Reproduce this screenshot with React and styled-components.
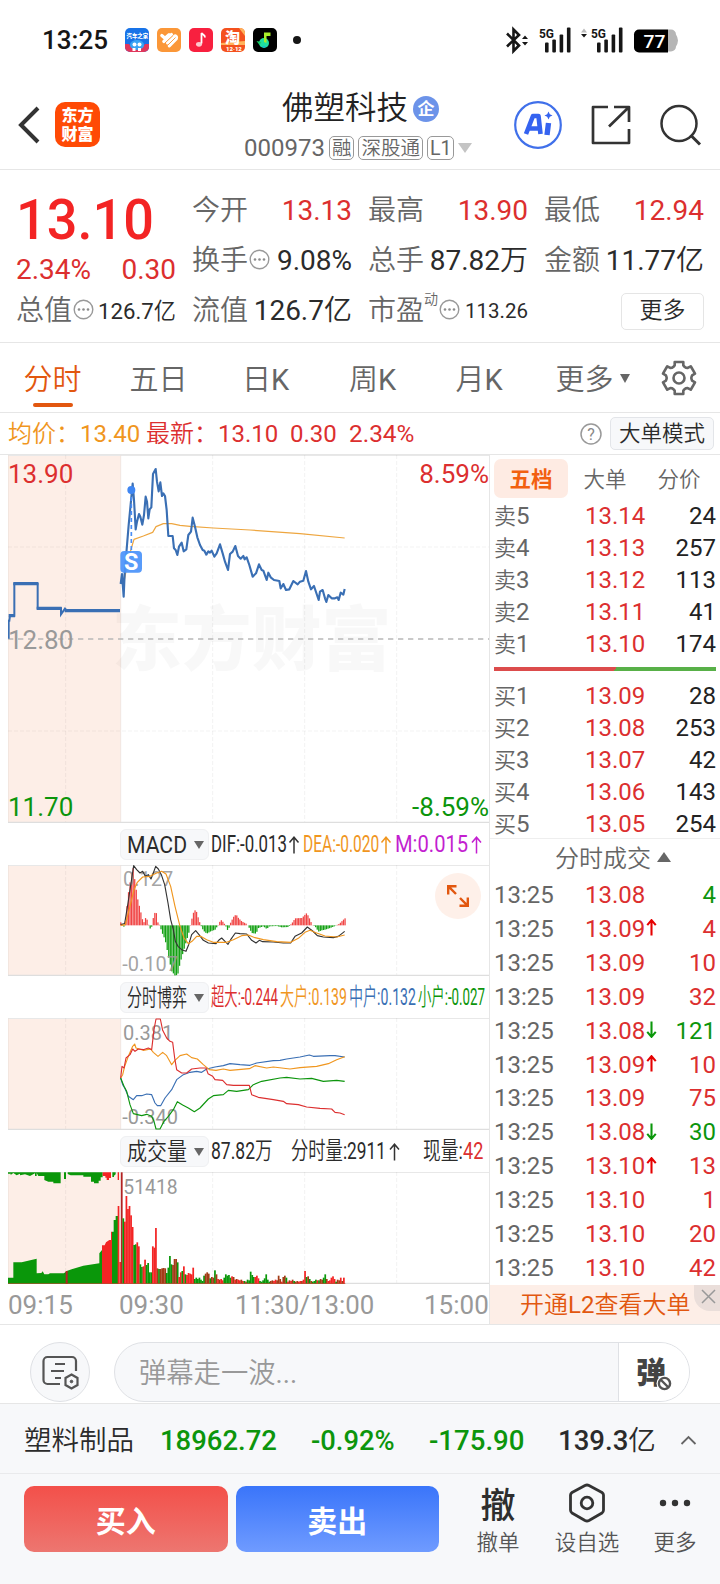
import React, { useLayoutEffect, useRef } from 'react';
import styled, { createGlobalStyle } from 'styled-components';

const C = {
  red: '#dc2f2f', green: '#0c950c', orange: '#f0961e', gray: '#666', light: '#999', ink: '#2b2b2b',
  line: '#e6e6e6', blue: '#3a6fb4', brand: '#e2570f', panel: '#f7f8fa', blush: '#fdeee7',
};

const Global = createGlobalStyle`
  * { box-sizing: border-box; }
  body { margin: 0; background: #fff; color: ${C.ink}; font-family: Roboto, "Noto Sans CJK SC DemiLight", "Noto Sans CJK SC", sans-serif; }
`;

const Screen = styled.div`
  width: 720px; height: 1584px; overflow: hidden;
  display: flex; flex-direction: column; background: #fff;
  line-height: 1; white-space: nowrap;
`;

/* Squeezes or stretches its text to a fixed width */
const FitBox = styled.span`
  display: inline-block; flex: none; width: ${p => p.$w}px; height: 1em;
  margin-left: ${p => p.$gap || 0}px; color: ${p => p.$color || 'inherit'};
  font-size: ${p => p.$size ? p.$size + 'px' : 'inherit'};
  font-weight: ${p => p.$weight || 'inherit'};
`;
const FitInner = styled.span`display: inline-block; transform-origin: 0 50%;`;
function Fit({ w, children, ...rest }) {
  const ref = useRef(null);
  useLayoutEffect(() => {
    const el = ref.current;
    el.style.transform = `scaleX(${w / el.offsetWidth})`;
  }, [w, children]);
  return <FitBox $w={w} {...rest}><FitInner ref={ref}>{children}</FitInner></FitBox>;
}

/* ---------- status bar ---------- */
const StatusBar = styled.div`
  height: 80px; flex: none; display: flex; align-items: center; padding: 0 41px 0 42px;
`;
const Clock = styled.span`font-size: 26px; font-weight: 500; color: #161616; width: 83px;`;
const AppIcons = styled.div`display: flex; gap: 8px;`;
const Dot = styled.span`width: 8px; height: 8px; border-radius: 4px; background: #161616; margin-left: 16px;`;
const StatusRight = styled.div`margin-left: auto; display: flex; height: 36px;`;

/* ---------- title bar ---------- */
const TitleBar = styled.header`
  height: 90px; flex: none; border-bottom: 1px solid ${C.line};
  display: flex; align-items: center; padding: 0 18px 0 18px;
`;
const Logo = styled.div`
  width: 45px; height: 45px; margin-left: 15px; border-radius: 10px; background: #ff4a05; color: #fff;
  font: 900 16px/19px "Noto Sans CJK SC", sans-serif; text-align: center; padding-top: 3px; white-space: normal;
`;
const TitleBlock = styled.div`
  flex: 1; height: 90px; padding: 10px 0 0 144px; display: flex; flex-direction: column; align-items: flex-start;
`;
const TitleLine = styled.div`
  display: flex; align-items: center; font-size: 31.5px; height: 38px; padding-left: 38px; color: #222;
`;
const Badge = styled.span`
  width: 26px; height: 26px; border-radius: 13px; background: #6c93e9; color: #fff; margin-left: 5px;
  font: 700 17px/24px "Noto Sans CJK SC", sans-serif; text-align: center;
`;
const CodeLine = styled.div`
  display: flex; align-items: center; font-size: 24px; height: 40px; color: ${C.gray}; gap: 4px;
`;
const Tag = styled.span`
  height: 24px; border: 1px solid #999; border-radius: 5px; padding: 0 2px; font-size: 19.5px; line-height: 23px; color: ${C.gray};
`;
const Caret = styled.span`
  width: 0; height: 0; border: ${p => p.$w / 2}px solid transparent; flex: none;
  border-${p => p.$up ? 'bottom' : 'top'}: ${p => p.$h}px solid ${p => p.$color || C.gray};
  border-${p => p.$up ? 'top' : 'bottom'}: 0; margin-left: ${p => p.$gap || 0}px; margin-bottom: ${p => p.$lift || 0}px;
`;
const TitleActions = styled.div`display: flex; align-items: center; width: 188px; justify-content: space-between;`;

/* ---------- quote ---------- */
const Quote = styled.section`
  height: 173px; flex: none; border-bottom: 1px solid ${C.line}; padding: 16px 16px 6px;
  display: grid; grid-template-columns: 160px 160px 160px 160px; column-gap: 16px; grid-template-rows: repeat(3, 50px);
`;
const Cell = styled.div`
  display: flex; align-items: center; justify-content: space-between; font-size: 28px; color: ${p => p.$color || C.ink};
`;
const CellLabel = styled.span`
  color: ${C.gray}; display: flex; align-items: center; margin-right: -6px;
  svg { margin: -4px 0 0 1px; }
`;
const Headline = styled.div`
  grid-row: span 2; display: flex; flex-direction: column; color: #f32424; padding-top: 6px;
`;
const Price = styled.div`font-size: 56px; font-weight: 500; height: 56px;`;
const Change = styled.div`display: flex; justify-content: space-between; font-size: 28px; color: ${C.red}; padding-top: 8px;`;
const Small = styled.span`font-size: ${p => p.$size}px;`;
const Sup = styled.span`font-size: 14px; align-self: flex-start; margin-top: -5px;`;
const MoreButton = styled.button`
  width: 83px; height: 37px; margin-left: auto; border: 1px solid #e5e5e5; border-radius: 5px; background: #fff;
  font: inherit; font-size: 23px; line-height: 32px; color: ${C.ink}; padding: 0;
`;

/* ---------- period tabs ---------- */
const PeriodTabs = styled.nav`
  height: 70px; flex: none; border-bottom: 1px solid ${C.line}; display: grid;
  grid-template-columns: 105px 107px 107px 107px 106px 121px 52px; font-size: 29px; color: ${C.gray};
`;
const PeriodTab = styled.div`
  display: flex; align-items: center; justify-content: center; padding-top: ${p => p.$top ?? 6}px; position: relative;
  color: ${p => p.$on ? C.brand : C.gray}; font-weight: ${p => p.$on ? 500 : 400};
  &::after { content: ''; display: ${p => p.$on ? 'block' : 'none'}; position: absolute; bottom: 5px; width: 40px; height: 4px; border-radius: 2px; background: ${C.brand}; }
`;

const InfoRow = styled.div`
  height: 42px; flex: none; border-bottom: 1px solid ${C.line}; display: flex; align-items: center;
  font-size: 24px; padding: 0 6px 0 8px; color: ${C.red};
`;
const HelpIcon = styled.svg`width: 22px; height: 22px; margin-left: auto;`;
const ModeButton = styled.button`
  width: 104px; height: 33px; margin-left: 8px; border: 1px solid #e3e5e9; border-radius: 5px; background: ${C.panel};
  font: inherit; font-size: 21.5px; line-height: 30px; padding: 0; color: ${C.ink};
`;

/* ---------- market area ---------- */
const Market = styled.main`height: 870px; flex: none; display: flex; border-bottom: 1px solid ${C.line};`;
const Charts = styled.div`width: 490px; border-right: 1px solid ${C.line}; padding-left: 8px; display: flex; flex-direction: column;`;
const Plot = styled.svg`display: block; width: 481px; height: ${p => p.$h}px; flex: none; font-family: Roboto, sans-serif;`;
const PlotWrap = styled.div`position: relative; height: ${p => p.$h}px; flex: none;`;
const ExpandButton = styled.button`
  position: absolute; right: 8px; top: 8px; width: 46px; height: 46px; border: 0; border-radius: 23px; background: #fef0e9; padding: 0;
  display: flex; align-items: center; justify-content: center;
`;
const LegendRow = styled.div`
  height: 42px; flex: none; padding: 1px 0 0 112px; display: flex; align-items: center; font-size: 23.5px;
  svg { flex: none; }
`;
const Chip = styled.div`
  width: 89px; height: 31px; flex: none; border-radius: 6px; background: ${C.panel}; border: 1px solid #eff0f2;
  display: flex; align-items: center; padding-left: 6px; margin-right: 2px; font-size: 24px; color: ${C.ink};
`;
const TimeAxis = styled.div`
  height: 40px; padding-top: 1px; display: flex; align-items: center; color: ${C.light}; font-size: 26px;
`;

const Book = styled.aside`width: 230px; display: flex; flex-direction: column;`;
const BookTabs = styled.div`height: 45px; flex: none; padding: 4px 4px 0 4px; display: flex; font-size: 21.5px; color: ${C.gray};`;
const BookTab = styled.div`
  width: 74px; height: 39px; line-height: 41px; text-align: center; border-radius: 7px;
  ${p => p.$on && `background: #feebe3; color: #f2600f; font-weight: 700; font-family: Roboto, "Noto Sans CJK SC", sans-serif;`}
`;
const Level = styled.div`
  height: ${p => p.$h}px; flex: none; display: grid; grid-template-columns: 91px 60px 1fr; align-items: center;
  padding: 0 4px; font-size: 24px; color: ${C.gray};
`;
const LevelPrice = styled.span`
  color: ${C.red}; display: flex; align-items: center;
  svg { flex: none; margin: -2px 0 0 -1px; }
`;
const Volume = styled.span`text-align: right; color: ${p => p.$color || '#222'};`;
const RatioBar = styled.div`
  height: 4px; flex: none; margin: 7px 4px 9px 4px;
  background: linear-gradient(125deg, #dc4c4c 0 54.6%, #58b048 54.6%);
`;
const TicksTitle = styled.div`
  height: 40px; flex: none; border-top: 1px solid #eee; display: flex; align-items: center; justify-content: center;
  font-size: 24px; color: ${C.gray}; padding-left: 16px; margin-top: -2px;
`;
const L2Banner = styled.div`
  height: 39px; margin-top: auto; flex: none; background: ${C.blush}; color: ${C.brand}; font-size: 24px;
  display: flex; justify-content: space-between; padding-left: 30px;
`;
const BannerText = styled.span`line-height: 40px;`;
const CloseTab = styled.span`
  width: 26px; height: 26px; background: #eadeda; border-bottom-left-radius: 16px; display: flex; align-items: center; justify-content: center; padding: 0 0 4px 3px;
`;

/* ---------- bottom ---------- */
const CommentRow = styled.div`
  height: 79px; flex: none; border-bottom: 1px solid ${C.line}; display: flex; padding: 17px 30px 0; gap: 24px;
`;
const RoundButton = styled.div`
  width: 60px; height: 60px; border: 1px solid #dfe1e5; border-radius: 30px; background: ${C.panel}; display: flex; align-items: center; justify-content: center;
`;
const CommentBox = styled.div`
  width: 576px; height: 60px; border: 1px solid #dfe1e5; border-radius: 30px; overflow: hidden; display: flex;
  background: ${C.panel}; color: ${C.light}; font-size: 28px;
`;
const Placeholder = styled.span`flex: 1; padding: 4px 0 0 24px; display: flex; align-items: center;`;
const Barrage = styled.span`
  width: 71px; background: #fff; border-left: 1px solid #dfe1e5; color: #444; position: relative;
  font: 900 30px/54px "Noto Sans CJK SC", sans-serif; padding-left: 17px;
`;
const BanMark = styled.svg`position: absolute; left: 37px; top: 32px;`;
const SectorRow = styled.div`
  height: 70px; flex: none; background: ${C.panel}; border-bottom: 1px solid #e9eaec; display: flex; align-items: center;
  font-size: 27px; padding: 5px 23px 0 24px; color: ${C.ink};
`;
const Chevron = styled.svg`width: 17px; height: 10px; margin: -3px 0 0 auto;`;
const TradeBar = styled.footer`flex: 1; background: ${C.panel}; display: flex; padding: 12px 0 0 24px; align-items: flex-start;`;
const TradeButton = styled.button`
  width: 203.5px; flex: none; height: 66px; border: 0; border-radius: 10px; margin-right: 8px; padding: 0 0 1px; color: #fff;
  font: 700 30px/1 "Noto Sans CJK SC", sans-serif; background: linear-gradient(${p => p.$from}, ${p => p.$to});
`;
const Tool = styled.div`
  display: flex; flex-direction: column; align-items: center; flex: none; width: ${p => p.$w}px; margin-left: ${p => p.$ml || 0}px;
  font-size: 21.5px; color: #555;
`;
const ToolIcon = styled.div`height: 46px; display: flex; align-items: center; justify-content: center; padding-bottom: 12px;`;
const CancelGlyph = styled.span`font: 500 35px/36px "Noto Sans CJK SC", sans-serif; color: #2e2e2e;`;

/* ---------- icons ---------- */
const InfoDots = () => (
  <svg width="21" height="21" viewBox="0 0 21 21">
    <circle cx="10.5" cy="10.5" r="9.3" fill="none" stroke="#999" strokeWidth="1.4" />
    <g fill="#8c8c8c"><circle cx="6" cy="10.5" r="1.3" /><circle cx="10.5" cy="10.5" r="1.3" /><circle cx="15" cy="10.5" r="1.3" /></g>
  </svg>
);
const Arrow = ({ color, up = true, w = 11, h = 18, sw = 1.5 }) => (
  <svg width={w} height={h} viewBox="0 0 11 18">
    <g transform={up ? undefined : 'rotate(180 5.5 9)'} fill="none" stroke={color} strokeWidth={sw}>
      <path d="M5.5 17.5V1.2M1 6.500L5.5 1.2L10 6.500" />
    </g>
  </svg>
);
const gearPath = (() => {
  let d = '';
  const r1 = 12.4, r2 = 16.6;
  for (let i = 0; i < 6; i++) {
    const a = -90 + i * 60;
    [[-27, r1], [-19, r1 + 0.9], [-15, r2], [15, r2], [19, r1 + 0.9], [27, r1]].forEach(([o, r]) => {
      const t = (a + o) * Math.PI / 180;
      d += `${d ? 'L' : 'M'}${(18 + r * Math.cos(t)).toFixed(2)} ${(18 + r * Math.sin(t)).toFixed(2)}`;
    });
  }
  return d + 'Z';
})();

function StatusIcons() {
  const bars = x => [0, 1, 2, 3].map(i => {
    const h = [10, 13, 18, 25][i];
    return <rect key={i} x={x + i * 7.3} y={25 - h} width="3.6" height={h} rx="1" />;
  });
  return (
    <svg width="174" height="36" viewBox="0 -5.5 174 36" fontFamily="Roboto" fontWeight="700">
      <g fill="#161616">
        <path d="M2 6L14 18L8.500 23.500V2L14 7.500L2 19" fill="none" stroke="#161616" strokeWidth="2.600" />
        <path d="M17 11.500l3-3.500l3 3.500zM17 14.500l3 3.500l3-3.500z" />
        <text x="34" y="10" fontSize="13.500" textLength="15" lengthAdjust="spacingAndGlyphs">5G</text>
        {bars(40)}
        <path d="M76 5l3-4l3 4z" fill="#bbb" /><path d="M76 6.500l3 3.500l3-3.500z" />
        <text x="86" y="10" fontSize="13.500" textLength="15" lengthAdjust="spacingAndGlyphs">5G</text>
        {bars(92)}
      </g>
      <path d="M163 2h3a5 5 0 0 1 5 5a12 12 0 0 1 2 6a12 12 0 0 1-2 6a5 5 0 0 1-5 5h-3z" fill="#b5b5b5" />
      <path d="M134 2h29v23h-29a5 5 0 0 1-5-5V7a5 5 0 0 1 5-5z" fill="#000" />
      <text x="138.500" y="20" fontSize="19" fill="#fff" textLength="22" fontWeight="500" lengthAdjust="spacingAndGlyphs">77</text>
    </svg>
  );
}

const AppIcon = styled.svg`width: 24px; height: 24px; border-radius: 5px; display: block;`;
function AppIconRow() {
  return (
    <AppIcons>
      <AppIcon viewBox="0 0 24 24" fontFamily="Noto Sans CJK SC" fontWeight="900">
        <rect width="24" height="24" fill="#1873e8" />
        <path d="M0 16h4l3 4h10l3-4h4v8H0z" fill="#e0375c" />
        <ellipse cx="12" cy="17" rx="7" ry="5" fill="#3aa4f4" />
        <circle cx="9.500" cy="16.500" r="2" fill="#fff" /><circle cx="14.500" cy="16.500" r="2" fill="#fff" />
        <path d="M7.500 20h3v3h-3zM13 20h3v3h-3z" fill="#fff" />
        <text x="1.500" y="9.700" fontSize="5.400" fill="#fff">汽车之家</text>
      </AppIcon>
      <AppIcon viewBox="0 0 24 24">
        <rect width="24" height="24" fill="#fb9738" />
        <path d="M4.800 7.500L8 10.300L12 6.800M6.800 13.500L14.500 6.500M12.300 17.800L19.200 10.800Q20.200 8.500 18 7.800L10.500 14.800" fill="none" stroke="#fff" strokeWidth="3.200" strokeLinecap="round" strokeLinejoin="round" />
        <path d="M7.500 15.500L16 7.500M11 17L18.500 9.500" fill="none" stroke="#fb9738" strokeWidth=".9" />
      </AppIcon>
      <AppIcon viewBox="0 0 24 24">
        <rect width="24" height="24" fill="#f8203f" />
        <ellipse cx="10" cy="16.300" rx="3" ry="2.400" fill="#fdc8cd" />
        <path d="M12.500 15.500V5c1 2 3.500 1.500 3.500 4.500" fill="none" stroke="#fff" strokeWidth="1.800" />
      </AppIcon>
      <AppIcon viewBox="0 0 24 24" fontFamily="Noto Sans CJK SC" fontWeight="900">
        <rect width="24" height="24" fill="#f4511e" />
        <path d="M18 0h6v8zM0 15l24-2v4H0z" fill="#ffb35c" />
        <text x="4" y="15" fontSize="15" fill="#fff">淘</text>
        <text x="5" y="22.500" fontSize="6" fill="#fff" fontFamily="Roboto">12·12</text>
      </AppIcon>
      <AppIcon viewBox="0 0 24 24">
        <rect width="24" height="24" fill="#000" />
        <circle cx="11" cy="15" r="5" fill="#1fe0a0" />
        <path d="M11 14V4.500h6.500v3.500l-4 0v7z" fill="#a8ee2a" /><path d="M3.500 13l5 1-2 3z" fill="#18cf66" />
        <path d="M9 18h4l-2 2z" fill="#16b8d8" />
      </AppIcon>
    </AppIcons>
  );
}

/* ---------- chart data (chart units, three to a pixel) ---------- */
const PRICE = '362,402 366,372 371,440 374,370 386,225 398,101 402,150 407,238 411,215 417,192 421,200 427,224 432,195 437,140 441,155 445,205 449,178 454,172 459,72 467,57 471,95 476,124 481,97 486,138 490,130 495,138 500,180 505,258 518,258 522,295 527,300 532,315 537,290 545,278 551,304 559,298 565,255 573,245 578,203 585,230 592,262 600,285 608,300 613,302 619,314 625,304 630,308 635,302 643,320 650,310 660,283 668,310 675,335 684,360 690,312 698,305 706,288 714,318 722,326 730,318 734,328 740,322 748,345 758,380 768,370 777,343 785,360 790,362 800,390 805,368 812,382 822,390 838,393 842,415 850,402 858,420 868,418 880,393 893,403 900,395 910,392 918,363 925,395 933,418 942,408 950,432 956,450 960,425 968,420 975,445 979,456 985,435 995,445 1005,445 1012,442 1016,450 1022,428 1030,434 1034,417';
const AVERAGE = '371,400 376,375 384,330 396,288 402,268 430,258 458,247 468,230 490,221 515,221 540,226 570,229 640,234 750,240 900,251 1034,264';
const DIF = '362,315 374,312 384,250 401,138 410,150 420,160 428,155 436,170 445,165 453,178 460,160 467,140 475,148 484,165 494,195 504,250 512,300 520,330 526,365 534,380 545,390 558,395 566,375 575,345 587,333 597,345 610,362 625,370 648,372 658,360 665,355 675,365 684,374 692,360 706,340 720,342 740,343 755,362 768,370 778,362 788,366 820,367 850,370 872,370 885,350 905,340 922,322 938,334 952,348 970,352 1000,354 1015,350 1034,335';
const DEA = '362,317 376,315 390,260 402,210 412,188 428,172 450,170 470,160 485,155 498,163 512,200 525,260 540,320 552,355 565,372 576,365 590,350 602,350 620,360 640,368 680,368 700,360 725,348 745,346 765,354 790,360 830,366 872,368 895,356 915,338 930,332 950,340 975,349 1010,352 1034,346';
const MACD = [362,308,372,322,376,305,384,225,398,137,404,180,412,235,420,268,430,312,436,295,441,300,446,317,453,333,458,300,467,270,474,312,480,317,484,335,495,360,505,410,515,455,525,468,533,465,540,430,550,395,560,360,566,340,572,310,582,272,588,272,596,300,602,317,610,333,620,342,632,335,645,330,655,315,662,300,670,308,676,317,684,335,690,312,700,292,708,284,715,295,725,305,738,312,745,320,755,340,768,342,775,325,790,320,800,328,808,320,830,319,845,323,865,322,876,310,885,296,905,295,920,280,930,300,936,316,945,320,955,336,965,332,975,330,990,325,1005,319,1018,312,1034,296];
const SUPER = '362,775 366,740 372,745 378,715 390,705 398,688 405,695 415,688 430,690 445,685 455,690 462,630 468,598 481,598 488,632 500,655 510,665 518,668 524,715 530,750 545,760 560,760 575,748 600,745 618,745 624,762 638,770 645,780 668,782 680,795 700,797 748,797 755,825 775,833 820,840 850,845 860,852 895,855 920,862 960,866 995,868 1005,878 1020,880 1034,885';
const LARGE = '362,775 368,765 374,740 385,710 398,680 404,673 408,685 430,692 452,688 460,698 474,710 488,698 500,708 515,735 525,722 540,708 560,703 575,714 592,718 610,735 628,750 648,752 670,748 690,752 748,747 765,738 800,745 820,742 870,748 900,744 950,740 985,732 1010,720 1034,711';
const MEDIUM = '362,775 368,795 374,805 385,830 400,840 410,828 425,828 440,823 455,825 465,850 472,858 482,858 495,835 515,810 530,780 550,765 570,758 590,755 605,758 620,748 645,742 670,738 690,732 720,735 750,737 770,730 820,723 840,722 860,718 900,712 928,706 940,710 990,708 1005,708 1034,712';
const SMALL = '362,775 372,800 380,815 390,855 400,882 425,888 440,884 455,890 462,905 468,928 480,928 492,905 505,890 520,870 532,846 548,856 565,865 583,876 600,865 625,838 640,828 670,825 685,812 710,815 745,810 760,795 785,785 840,775 860,773 900,778 935,776 970,785 1010,782 1034,785';

const histogram = (() => {
  const out = [];
  let k = 0;
  for (let x = 362; x <= 1035; x += 4.64) {
    while (k < MACD.length - 4 && MACD[k + 2] < x) k += 2;
    const t = Math.min(1, (x - MACD[k]) / (MACD[k + 2] - MACD[k]));
    out.push([x, MACD[k + 1] + t * (MACD[k + 3] - MACD[k + 1])]);
  }
  return out;
})();

/* one bar per minute; r = up, g = down, d = mixed, D = opening minute */
const VOLUMES = 'r65 D334 g196 r186 r263 r224 r233 r205 r170 g116 g118 r124 r112 g58 g50 r52 r72 g56 g62 g34 g34 r112 r108 r167 d46 g44 d44 d46 d47 d46 g32 g48 g83 g58 d56 d74 d74 g64 r20 r34 g38 r52 g28 r26 r32 r30 r28 r48 g14 g18 g14 g18 g12 g8 g24 d30 d34 d30 g16 d20 d18 g40 d28 r14 d12 r14 r10 g18 g28 g24 g26 g18 r22 d20 r12 d14 r12 r10 d12 r8 g8 d6 g12 g10 g36 g26 g20 r20 r24 r16 g8 g6 g10 g16 g28 g12 g6 d8 d10 r8 r12 d10 d24 d14 r6 d20 d24 g18 r6 d10 r8 d12 g8 d6 d8 r6 r8 d8 r12 r38 g20 d22 g14 d8 g6 g8 g12 r10 g10 d14 d12 g18 g28 d14 r8 r10 r18 r22 r14 g6 d12 d10 r18 d8 r18'
  .split(' ').map((s, i) => ({ k: s[0], h: +s.slice(1), x: 358 + i * 4.66 }));
const volFill = { r: '#f32424', g: '#0a970a', d: '#a33c17', D: '#b32222' };

function Grid({ top, height }) {
  const b = top + height;
  return (
    <g>
      <rect x="24" y={top} width="338" height={height} fill={C.blush} />
      <path d={`M24 ${top + 1.5}H1467`} stroke="#e8e8e8" strokeWidth="3" />
      <path d={`M25 ${top}V${b}M362 ${top}V${b}`} stroke="#ecdfda" strokeWidth="2" />
      <path d={`M197 ${top}V${b}M638 ${top}V${b}M914 ${top}V${b}M1190 ${top}V${b}`} stroke="#000" strokeOpacity=".055" strokeWidth="3" strokeDasharray="12 6" />
      <path d={`M24 ${b - 2}H1467`} stroke="#dedede" strokeWidth="4" />
    </g>
  );
}
const Line = ({ points, color, w = 3.4 }) => <polyline points={points} fill="none" stroke={color} strokeWidth={w} strokeLinejoin="round" />;

function PriceChart() {
  return (
    <Plot $h={368} viewBox="24 15 1443 1104" fontSize="78">
      <Grid top={15} height={1104} />
      <text x="336" y="646" fontSize="212" fontWeight="900" fontFamily="Noto Sans CJK SC" fill="#000" fillOpacity=".028" textLength="838" lengthAdjust="spacingAndGlyphs">东方财富</text>
      <path d="M24 291H1467M24 843H1467" stroke="#000" strokeOpacity=".05" strokeWidth="3" strokeDasharray="12 6" />
      <path d="M24 567H1467" stroke="#b8b8b8" strokeWidth="5" strokeDasharray="16 14" />
      <Line points={AVERAGE} color="#eea63f" w={3.6} />
      <path d="M26 566V512H28L30 497H43V401H113V475H183V493L195 476L201 482H360" fill="none" stroke={C.blue} strokeWidth="6" />
      <path d="M26 497H45M40 401H115M110 475H185M194 482H360" stroke={C.blue} strokeWidth="10" />
      <Line points={PRICE} color={C.blue} w={6.4} />
      <path d="M394 120V300" stroke="#4a8ef5" strokeWidth="5" strokeDasharray="12 9" />
      <circle cx="394" cy="120" r="12" fill="#3f86f2" />
      <rect x="361" y="303" width="65" height="65" rx="12" fill="#4b93fa" fillOpacity=".93" />
      <text x="393.500" y="360" fontSize="70" fontWeight="700" fill="#fff" textAnchor="middle">S</text>
      <text x="24" y="98" fill={C.red}>13.90</text>
      <text x="24" y="598" fill={C.light}>12.80</text>
      <text x="24" y="1098" fill={C.green}>11.70</text>
      <text x="1467" y="98" fill={C.red} textAnchor="end">8.59%</text>
      <text x="1467" y="1098" fill={C.green} textAnchor="end">-8.59%</text>
    </Plot>
  );
}
function MacdChart() {
  return (
    <PlotWrap $h={111}>
      <Plot $h={111} viewBox="24 136 1443 333" fontSize="60">
        <Grid top={136} height={333} />
        {histogram.map(([x, y]) => (
          <rect key={x} x={x - 1.5} y={Math.min(317, y)} width="3.800" height={Math.abs(y - 317)} fill={y < 317 ? '#f04444' : '#12a012'} />
        ))}
        <text x="369" y="200" fill={C.light} fillOpacity=".9">0.127</text>
        <text x="367" y="453" fill={C.light} fillOpacity=".9">-0.107</text>
        <Line points={DIF} color="#333" />
        <Line points={DEA} color={C.orange} />
      </Plot>
      <ExpandButton>
        <svg width="24" height="24" viewBox="0 0 24 24" fill="none" stroke={C.brand} strokeWidth="2.400">
          <path d="M10.500 2.200H2.200V10.500M2.200 2.200L10 10M13.500 21.800H21.800V13.500M21.800 21.800L14 14" />
        </svg>
      </ExpandButton>
    </PlotWrap>
  );
}
function FlowChart() {
  return (
    <Plot $h={112} viewBox="24 595 1443 336" fontSize="60">
      <Grid top={595} height={336} />
      <text x="369" y="661" fill={C.light}>0.381</text>
      <text x="367" y="914" fill={C.light}>-0.340</text>
      <Line points={MEDIUM} color={C.blue} />
      <Line points={SMALL} color={C.green} />
      <Line points={LARGE} color={C.orange} />
      <Line points={SUPER} color={C.red} />
    </Plot>
  );
}
function VolumeChart() {
  return (
    <Plot $h={112} viewBox="24 126 1443 336" fontSize="58">
      <Grid top={126} height={336} />
      <path fill="#0a970a" d="M24 461V443H40V397H65L110 386V430L124 429L128 424L133 433H145L150 430H192L200 423L215 418L250 407L298 400V370L306 360V461z" />
      <path fill="#f32424" d="M306 461V346H314L318 337L328 330H333V305H336V461z" />
      <path fill="#b32222" d="M197 461V423H203V461z" />
      <path fill="#0a970a" d="M336 461V305H341V270H347V258H354V461zM192 127H198V147H192zM203 127V132L212 136H250V140H273V155H282V160H296V152H302V142H308V127zM337 127V141H342V137L347 133V127z" />
      <path fill="#0a970a" d="M24 127V131H32V135L40 129L50 136L60 131V136L75 133L90 138L105 130V138H110V129L115 138H133V150L145 155H160V160H182V127z" />
      <path fill="#f32424" d="M308 127V138H316V143H320V150H327V144H333V127zM353 127H357V150H353zM353 461V228H358V461z" />
      {VOLUMES.map(v => <rect key={v.x} x={v.x} y={461 - v.h} width="5.200" height={v.h} fill={volFill[v.k]} />)}
      <path d="M24 461H1036" stroke="#b03010" strokeWidth="2" />
      <text x="370" y="191" fill={C.light}>51418</text>
    </Plot>
  );
}

const ASKS = [['卖', 5, '13.14', 24], ['卖', 4, '13.13', 257], ['卖', 3, '13.12', 113], ['卖', 2, '13.11', 41], ['卖', 1, '13.10', 174]];
const BIDS = [['买', 1, '13.09', 28], ['买', 2, '13.08', 253], ['买', 3, '13.07', 42], ['买', 4, '13.06', 143], ['买', 5, '13.05', 254]];
const TICKS = [['13.08', '', 4, 1], ['13.09', 'u', 4], ['13.09', '', 10], ['13.09', '', 32], ['13.08', 'd', 121, 1], ['13.09', 'u', 10], ['13.09', '', 75], ['13.08', 'd', 30, 1], ['13.10', 'u', 13], ['13.10', '', 1], ['13.10', '', 20], ['13.10', '', 42]];
const levels = rows => rows.map(([side, n, price, qty]) => (
  <Level key={side + n} $h={32}>
    <span><Small $size={22}>{side}</Small>{n}</span>
    <LevelPrice>{price}</LevelPrice><Volume>{qty}</Volume>
  </Level>
));

export default function App() {
  return (
    <Screen>
      <Global />
      <StatusBar>
        <Clock>13:25</Clock>
        <AppIconRow />
        <Dot />
        <StatusRight><StatusIcons /></StatusRight>
      </StatusBar>

      <TitleBar>
        <svg width="22" height="38" viewBox="0 0 22 38"><path d="M20 2L3 19L20 36" fill="none" stroke="#333" strokeWidth="4" /></svg>
        <Logo>东方<br />财富</Logo>
        <TitleBlock>
          <TitleLine>佛塑科技<Badge>企</Badge></TitleLine>
          <CodeLine>000973<Tag>融</Tag><Tag>深股通</Tag><Tag>L1</Tag><Caret $w={15} $h={10} $color="#c4c4c4" /></CodeLine>
        </TitleBlock>
        <TitleActions>
          <svg width="48" height="48" viewBox="0 0 48 48">
            <circle cx="24" cy="24" r="22.800" fill="none" stroke="#4070ea" strokeWidth="2.200" />
            <path d="M12 33L19 15H24.500L26.500 33M15.500 27.500H25" fill="none" stroke="#3563f0" strokeWidth="4.600" strokeLinejoin="round" />
            <path d="M34.500 22L33 34" stroke="#3563f0" strokeWidth="5.400" />
            <path d="M34.500 10.500l1.300 2.700l2.700 1.300l-2.700 1.300l-1.300 2.700l-1.300-2.700l-2.700-1.300l2.700-1.300z" fill="#3563f0" />
          </svg>
          <svg width="40" height="40" viewBox="0 0 40 40" fill="none" stroke="#333" strokeWidth="2.700" strokeLinejoin="round">
            <path d="M17 2H2V38H38V24M23 2H38V17M38 2L18 21.500" />
          </svg>
          <svg width="42" height="42" viewBox="0 0 42 42" fill="none" stroke="#333" strokeWidth="2.500">
            <circle cx="19" cy="19.500" r="17.500" /><path d="M30.500 31L40 40.500" strokeWidth="3" />
          </svg>
        </TitleActions>
      </TitleBar>

      <Quote>
        <Headline>
          <Price><Fit w={138}>13.10</Fit></Price>
          <Change><span>2.34%</span><span>0.30</span></Change>
        </Headline>
        <Cell $color={C.red}><CellLabel>今开</CellLabel>13.13</Cell>
        <Cell $color={C.red}><CellLabel>最高</CellLabel>13.90</Cell>
        <Cell $color={C.red}><CellLabel>最低</CellLabel>12.94</Cell>
        <Cell><CellLabel>换手<InfoDots /></CellLabel>9.08%</Cell>
        <Cell><CellLabel>总手</CellLabel>87.82万</Cell>
        <Cell><CellLabel>金额</CellLabel>11.77亿</Cell>
        <Cell><CellLabel>总值<InfoDots /></CellLabel><Small $size={22.2}>126.7亿</Small></Cell>
        <Cell><CellLabel>流值</CellLabel>126.7亿</Cell>
        <Cell><CellLabel>市盈<Sup>动</Sup><InfoDots /></CellLabel><Small $size={20.5}>113.26</Small></Cell>
        <Cell><MoreButton>更多</MoreButton></Cell>
      </Quote>

      <PeriodTabs>
        <PeriodTab $on>分时</PeriodTab><PeriodTab>五日</PeriodTab><PeriodTab>日K</PeriodTab>
        <PeriodTab>周K</PeriodTab><PeriodTab>月K</PeriodTab>
        <PeriodTab>更多<Caret $w={10} $h={9} $gap={6} $lift={4} /></PeriodTab>
        <PeriodTab $top={0}>
          <svg width="36" height="36" viewBox="0 0 36 36" fill="none" stroke="#666" strokeWidth="2.600" strokeLinejoin="round">
            <path d={gearPath} /><circle cx="18" cy="18" r="5.500" />
          </svg>
        </PeriodTab>
      </PeriodTabs>

      <InfoRow>
        <Fit w={132} $color={C.orange}>均价：13.40</Fit>
        <Fit w={132} $gap={6}>最新：13.10</Fit>
        <Fit w={47} $gap={12}>0.30</Fit>
        <Fit w={65} $gap={12}>2.34%</Fit>
        <HelpIcon viewBox="0 0 22 22">
          <circle cx="11" cy="11" r="10" fill="none" stroke="#999" strokeWidth="1.500" />
          <text x="11" y="16.500" fontSize="16" fill="#888" textAnchor="middle" fontFamily="Roboto">?</text>
        </HelpIcon>
        <ModeButton>大单模式</ModeButton>
      </InfoRow>

      <Market>
        <Charts>
          <PriceChart />
          <LegendRow>
            <Chip><Fit w={60}>MACD</Fit><Caret $w={10} $h={8} $gap={7} /></Chip>
            <Fit w={76}>DIF:-0.013</Fit><Arrow color="#333" w={14} />
            <Fit w={76} $gap={2} $color={C.orange}>DEA:-0.020</Fit><Arrow color={C.orange} w={14} />
            <Fit w={73} $gap={2} $color="#c31fd0">M:0.015</Fit><Arrow color="#c31fd0" w={17} />
          </LegendRow>
          <MacdChart />
          <LegendRow>
            <Chip><Fit w={60}>分时博弈</Fit><Caret $w={10} $h={8} $gap={7} /></Chip>
            <Fit w={67} $color={C.red}>超大:-0.244</Fit>
            <Fit w={67} $gap={2} $color={C.orange}>大户:0.139</Fit>
            <Fit w={67} $gap={2} $color={C.blue}>中户:0.132</Fit>
            <Fit w={67} $gap={2} $color={C.green}>小户:-0.027</Fit>
          </LegendRow>
          <FlowChart />
          <LegendRow>
            <Chip><Fit w={60}>成交量</Fit><Caret $w={10} $h={8} $gap={7} /></Chip>
            <Fit w={62}>87.82万</Fit>
            <Fit w={95} $gap={18}>分时量:2911</Fit><Arrow color="#333" w={17} />
            <Fit w={40} $gap={20}>现量:</Fit><Fit w={20} $color={C.red}>42</Fit>
          </LegendRow>
          <VolumeChart />
          <TimeAxis>
            <Fit w={65}>09:15</Fit><Fit w={65} $gap={46}>09:30</Fit>
            <Fit w={139} $gap={51}>11:30/13:00</Fit><Fit w={65} $gap={50}>15:00</Fit>
          </TimeAxis>
        </Charts>

        <Book>
          <BookTabs><BookTab $on>五档</BookTab><BookTab>大单</BookTab><BookTab>分价</BookTab></BookTabs>
          {levels(ASKS)}
          <RatioBar />
          {levels(BIDS)}
          <TicksTitle>分时成交<Caret $w={15} $h={10} $gap={6} $up $lift={4} /></TicksTitle>
          {TICKS.map(([price, dir, qty, sell], i) => (
            <Level key={i} $h={33.93}>
              <span>13:25</span>
              <LevelPrice>{price}{dir && <Arrow up={dir === 'u'} color={dir === 'u' ? '#e60000' : '#0a970a'} w={15} h={17} sw={2.2} />}</LevelPrice>
              <Volume $color={sell ? C.green : C.red}>{qty}</Volume>
            </Level>
          ))}
          <L2Banner>
            <BannerText>开通L2查看大单</BannerText>
            <CloseTab><svg width="15" height="15" viewBox="0 0 15 15"><path d="M1 1L14 14M14 1L1 14" stroke="#999" strokeWidth="1.500" /></svg></CloseTab>
          </L2Banner>
        </Book>
      </Market>

      <CommentRow>
        <RoundButton>
          <svg width="38" height="36" viewBox="0 0 38 36" fill="none" stroke="#555" strokeWidth="2.200">
            <path d="M19 30H6.500a4 4 0 0 1-4-4V7a4 4 0 0 1 4-4H31a4 4 0 0 1 4 4V17" />
            <path d="M14 10H24M10 17H23M14 24H20" />
            <path d="M30.500 20.500L36.500 24V31L30.500 34.500L24.500 31V24z" /><circle cx="30.500" cy="27.500" r="1.300" fill="#555" strokeWidth="1" />
          </svg>
        </RoundButton>
        <CommentBox>
          <Placeholder><Fit w={158}>弹幕走一波...</Fit></Placeholder>
          <Barrage>弹
            <BanMark width="17" height="17" viewBox="0 0 17 17" fill="none" stroke="#fff">
              <circle cx="8.500" cy="8.500" r="8" fill="#fff" stroke="none" />
              <g stroke="#555" strokeWidth="2.400"><circle cx="8.500" cy="8.500" r="5.600" /><path d="M5 5L12 12" /></g>
            </BanMark>
          </Barrage>
        </CommentBox>
      </CommentRow>

      <SectorRow>
        <Fit w={110}>塑料制品</Fit>
        <Fit w={117} $gap={26} $color={C.green} $weight={500}>18962.72</Fit>
        <Fit w={84} $gap={34} $color={C.green} $weight={500}>-0.92%</Fit>
        <Fit w={95} $gap={34} $color={C.green} $weight={500}>-175.90</Fit>
        <Fit w={98} $gap={34} $weight={500}>139.3亿</Fit>
        <Chevron viewBox="0 0 17 10"><path d="M1.500 9L8.500 2L15.500 9" fill="none" stroke="#666" strokeWidth="1.800" /></Chevron>
      </SectorRow>

      <TradeBar>
        <TradeButton $from="#f3504a" $to="#ed7670">买入</TradeButton>
        <TradeButton $from="#3a75fa" $to="#6f9bff">卖出</TradeButton>
        <Tool $w={102}><ToolIcon><CancelGlyph>撤</CancelGlyph></ToolIcon>撤单</Tool>
        <Tool $w={76}>
          <ToolIcon>
            <svg width="38" height="42" viewBox="0 0 38 42" fill="none" stroke="#333" strokeWidth="2.800" strokeLinejoin="round">
              <path d="M17 3.500Q19 2.500 21 3.500L34 10.500Q35.500 11.500 35.500 13V28Q35.500 30 34 31L21 38.500Q19 39.500 17 38.500L4 31Q2.500 30 2.500 28V13Q2.500 11.500 4 10.500z" />
              <circle cx="19" cy="21" r="5.800" />
            </svg>
          </ToolIcon>设自选
        </Tool>
        <Tool $w={50} $ml={25}>
          <ToolIcon><svg width="32" height="8" viewBox="0 0 32 8" fill="#333"><circle cx="4" cy="4" r="3.200" /><circle cx="16" cy="4" r="3.200" /><circle cx="28" cy="4" r="3.200" /></svg></ToolIcon>更多
        </Tool>
      </TradeBar>
    </Screen>
  );
}
